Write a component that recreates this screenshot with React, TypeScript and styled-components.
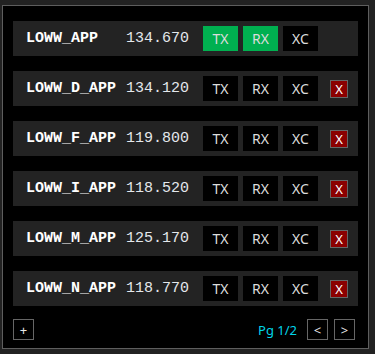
import React from 'react';
import styled, { createGlobalStyle } from 'styled-components';

const GlobalStyle = createGlobalStyle`
    html, body {
        margin: 0;
        padding: 0;
        background-color: #222222;
    }
`;

const Page = styled.div`
    padding: 5px 6px 5px 2px;
    width: 375px;
    height: 354px;
    box-sizing: border-box;
`;

const Panel = styled.div`
    height: 344px;
    box-sizing: border-box;
    border: 1px solid #5e5e5e;
    background-color: #000;
    padding: 15px 10px 7px 10px;
    display: flex;
    flex-direction: column;
`;

const List = styled.div`
    display: flex;
    flex-direction: column;
    gap: 15px;
`;

const Row = styled.div`
    display: flex;
    align-items: center;
    height: 35px;
    background-color: #232323;
    padding: 0 10px 0 13px;
`;

const Name = styled.span`
    width: 100px;
    font-family: "Liberation Mono", "Courier New", monospace;
    font-weight: bold;
    font-size: 15px;
    color: #ffffff;
    white-space: nowrap;
`;

const Freq = styled.span`
    width: 77px;
    font-family: "Liberation Mono", "Courier New", monospace;
    font-size: 15px;
    color: #e4e8ec;
`;

const Buttons = styled.div`
    display: flex;
    gap: 5px;
`;

const ModeButton = styled.div<{ $active?: boolean }>`
    width: 35px;
    height: 25px;
    display: flex;
    align-items: center;
    justify-content: center;
    background-color: ${p => (p.$active ? '#00b050' : '#000')};
    color: #dcdcdc;
    font-family: "Noto Sans", "Liberation Sans", sans-serif;
    font-size: 14px;
`;

const Remove = styled.div`
    margin-left: auto;
    width: 16px;
    height: 16px;
    border: 1px solid #666;
    background-color: #8b0000;
    color: #ffffff;
    font-family: "Noto Sans", "Liberation Sans", sans-serif;
    font-size: 13px;
    display: flex;
    align-items: center;
    justify-content: center;
`;

const Footer = styled.div`
    margin-top: 13px;
    display: flex;
    align-items: center;
    padding-right: 3px;
`;

const SmallButton = styled.div`
    width: 19px;
    height: 19px;
    border: 1px solid #666;
    background-color: #000;
    color: #e8e8e8;
    font-family: "Noto Sans", "Liberation Sans", sans-serif;
    font-size: 13px;
    display: flex;
    align-items: center;
    justify-content: center;
`;

const Pager = styled.div`
    margin-left: auto;
    display: flex;
    align-items: center;
    gap: 6px;
`;

const PageLabel = styled.span`
    color: #00d4e8;
    font-family: "Noto Sans", "Liberation Sans", sans-serif;
    font-size: 13px;
    margin-right: 4px;
`;

type Station = {
    name: string;
    freq: string;
    tx: boolean;
    rx: boolean;
    removable: boolean;
};

const stations: Station[] = [
    { name: 'LOWW_APP', freq: '134.670', tx: true, rx: true, removable: false },
    { name: 'LOWW_D_APP', freq: '134.120', tx: false, rx: false, removable: true },
    { name: 'LOWW_F_APP', freq: '119.800', tx: false, rx: false, removable: true },
    { name: 'LOWW_I_APP', freq: '118.520', tx: false, rx: false, removable: true },
    { name: 'LOWW_M_APP', freq: '125.170', tx: false, rx: false, removable: true },
    { name: 'LOWW_N_APP', freq: '118.770', tx: false, rx: false, removable: true },
];

const App = () => {
    return (
        <Page>
            <GlobalStyle />
            <Panel>
                <List>
                    {stations.map(s => (
                        <Row key={s.name}>
                            <Name>{s.name}</Name>
                            <Freq>{s.freq}</Freq>
                            <Buttons>
                                <ModeButton $active={s.tx}>TX</ModeButton>
                                <ModeButton $active={s.rx}>RX</ModeButton>
                                <ModeButton>XC</ModeButton>
                            </Buttons>
                            {s.removable && <Remove>X</Remove>}
                        </Row>
                    ))}
                </List>
                <Footer>
                    <SmallButton>+</SmallButton>
                    <Pager>
                        <PageLabel>Pg 1/2</PageLabel>
                        <SmallButton>&lt;</SmallButton>
                        <SmallButton>&gt;</SmallButton>
                    </Pager>
                </Footer>
            </Panel>
        </Page>
    );
};

export default App;
